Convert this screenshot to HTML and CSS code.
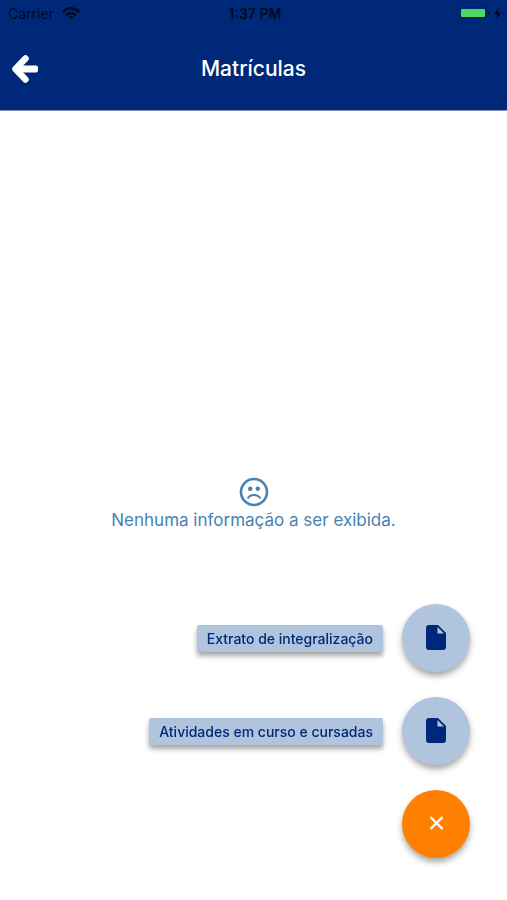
FILE: index.html
```html
<!DOCTYPE html>
<html lang="pt-BR">
<head>
    <meta charset="UTF-8">
    <meta name="viewport" content="width=device-width, initial-scale=1.0">
    <title>Matrículas</title>
    <link rel="stylesheet" href="styles.css">
</head>
<body>
    <header class="header">
        <div class="status-bar">
            <div class="carrier">
                <span>Carrier</span>
                <svg width="18" height="13" viewBox="0 0 18 13" fill="none" stroke="currentColor" stroke-width="2.4">
                    <path d="M1 5Q9 -2.4 17 5"/>
                    <path d="M4 8.2Q9 3.6 14 8.2"/>
                    <path d="M9 12.5L6.3 9.8Q9 7.6 11.7 9.8Z" fill="currentColor" stroke="none"/>
                </svg>
            </div>
            <div class="time">1:37 PM</div>
            <div class="battery">
                <svg width="42" height="14" viewBox="0 0 42 14">
                    <rect x="0.5" y="0.5" width="26" height="11" rx="2" fill="none" stroke="#001f63"/>
                    <rect x="1" y="2" width="24" height="8" rx="1" fill="#4cd964"/>
                    <path d="M28 4Q30 6 28 8Z" fill="#001238"/>
                    <path d="M38.5 0.5L34 7.5H37L36.5 12.5L41 5.5H38Z" fill="#000a20"/>
                </svg>
            </div>
        </div>
        <nav class="nav-bar">
            <button class="back-button" type="button" aria-label="Voltar">
                <svg width="28" height="30" viewBox="0 0 28 30" fill="none" stroke="currentColor" stroke-linecap="round" stroke-linejoin="round">
                    <path d="M14.5 4.5L4.5 15L14.5 25.5" stroke-width="6.5"/>
                    <path d="M5 11.5H25Q27 11.5 27 13.5V16.5Q27 18.5 25 18.5H5Z" fill="currentColor" stroke="none"/>
                </svg>
            </button>
            <h1>Matrículas</h1>
        </nav>
    </header>

    <main class="empty">
        <svg width="30" height="30" viewBox="0 0 30 30" fill="none" stroke="currentColor">
            <circle cx="15" cy="15" r="13" stroke-width="2.6"/>
            <circle cx="11.2" cy="11.7" r="2.2" fill="currentColor" stroke="none"/>
            <circle cx="18.8" cy="11.7" r="2.2" fill="currentColor" stroke="none"/>
            <path d="M8.7 21.4Q10.6 18 15 18T21.3 21.4" stroke-width="2"/>
        </svg>
        <p>Nenhuma informação a ser exibida.</p>
    </main>

    <div class="fab-menu">
        <div class="fab-item">
            <label class="fab-label" for="extrato">Extrato de integralização</label>
            <button class="fab" id="extrato" type="button">
                <svg width="20" height="25" viewBox="0 0 20 25">
                    <path d="M3 0H12L20 8V22Q20 25 17 25H3Q0 25 0 22V3Q0 0 3 0ZM11.5 2V8.5H18Z" fill="currentColor" fill-rule="evenodd"/>
                </svg>
            </button>
        </div>
        <div class="fab-item">
            <label class="fab-label" for="atividades">Atividades em curso e cursadas</label>
            <button class="fab" id="atividades" type="button">
                <svg width="20" height="25" viewBox="0 0 20 25">
                    <path d="M3 0H12L20 8V22Q20 25 17 25H3Q0 25 0 22V3Q0 0 3 0ZM11.5 2V8.5H18Z" fill="currentColor" fill-rule="evenodd"/>
                </svg>
            </button>
        </div>
        <button class="fab fab-close" type="button" aria-label="Fechar">
            <svg width="14" height="14" viewBox="0 0 14 14" fill="none" stroke="currentColor" stroke-width="2.4">
                <path d="M1.5 1L13.5 13M13.5 1L1.5 13"/>
            </svg>
        </button>
    </div>
</body>
</html>
```
FILE: styles.css
```css
* {
    box-sizing: border-box;
}

body {
    display: flex;
    flex-direction: column;
    min-height: 100vh;
    margin: 0;
    font-family: Inter, "Liberation Sans", sans-serif;
    background: #fff;
}

svg {
    display: block;
}

button {
    padding: 0;
    border: none;
    cursor: pointer;
}

.header {
    background: #002878;
    border-bottom: 1px solid #8795bd;
}

.status-bar {
    display: grid;
    grid-template-columns: 1fr auto 1fr;
    align-items: center;
    height: 27px;
    padding: 0 5px 0 8px;
    font-size: 14px;
    color: #000a20;
}

.carrier {
    display: flex;
    align-items: center;
    gap: 8px;
}

.time {
    font-weight: 600;
}

.battery {
    justify-self: end;
}

.nav-bar {
    display: grid;
    grid-template-columns: 28px 1fr 28px;
    align-items: center;
    height: 83px;
    padding: 0 11px;
    color: #fff;
}

.back-button {
    background: none;
    color: inherit;
}

.nav-bar h1 {
    margin: 0;
    font-size: 21px;
    font-weight: 500;
    text-align: center;
}

.empty {
    flex: 1;
    display: flex;
    flex-direction: column;
    align-items: center;
    justify-content: center;
    gap: 2px;
    padding-bottom: 4px;
    color: #4682b4;
}

.empty p {
    margin: 0;
    font-size: 17px;
    line-height: 22px;
}

/* floats over the page content */
.fab-menu {
    position: fixed;
    right: 37px;
    bottom: 42px;
    display: flex;
    flex-direction: column;
    align-items: flex-end;
    gap: 25px;
}

.fab-item {
    display: flex;
    align-items: center;
    gap: 19px;
}

.fab-label {
    padding: 0 10px;
    border-radius: 2px;
    background: #b0c4de;
    color: #002878;
    font-size: 14px;
    font-weight: 500;
    line-height: 27px;
    box-shadow: 0 4px 5px rgba(0, 0, 0, 0.35);
    cursor: pointer;
}

.fab {
    display: flex;
    align-items: center;
    justify-content: center;
    width: 68px;
    height: 68px;
    padding-bottom: 2px;
    border-radius: 50%;
    background: #b0c4de;
    color: #002878;
    box-shadow: 0 4px 6px rgba(0, 0, 0, 0.35);
}

.fab-close {
    background: #ff8000;
    color: #fff;
}
```
